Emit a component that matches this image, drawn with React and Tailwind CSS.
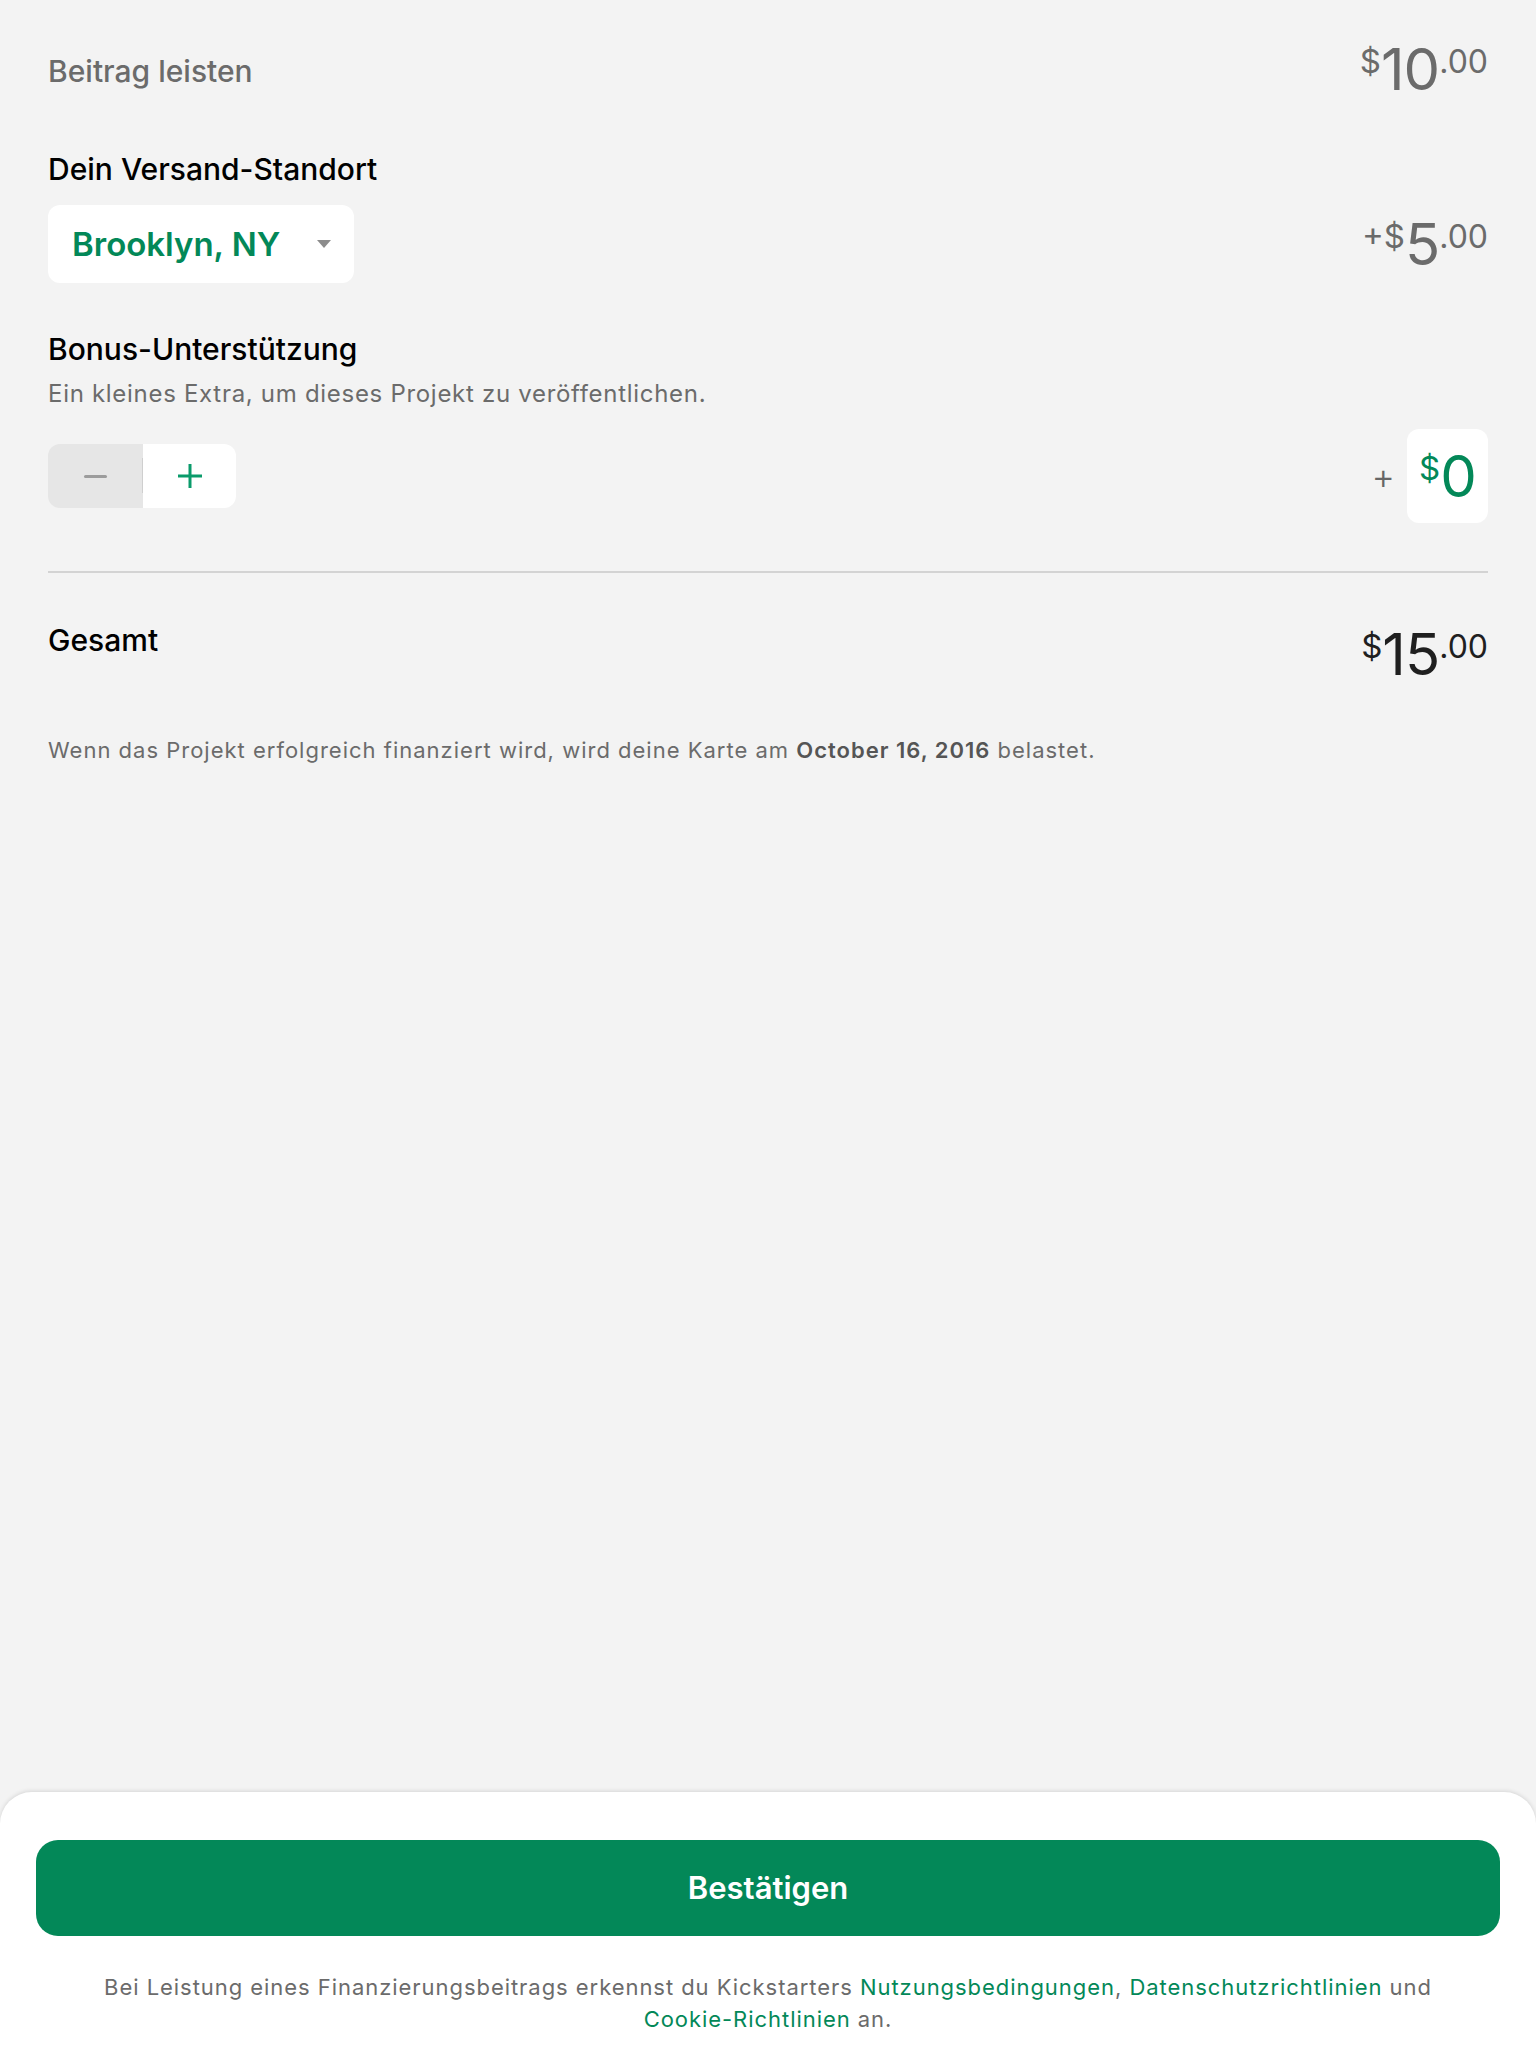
import React from "react";

const Price = ({ prefix, whole, cents, color }) => (
  <div className={`flex items-start leading-none ${color}`}>
    {prefix && <span className="text-[33px] mt-[5px]">{prefix}</span>}
    <span className="text-[58px] leading-none tracking-[-1px]">{whole}</span>
    {cents && <span className="text-[32px] mt-[6px]">{cents}</span>}
  </div>
);

const Caret = () => (
  <svg width="14" height="8" viewBox="0 0 14 8" className="shrink-0">
    <path d="M0 0h14L7 8z" fill="#8c8c8c" />
  </svg>
);

const Stepper = () => (
  <div className="flex w-[188px] h-16 rounded-[12px] overflow-hidden">
    <button className="w-[95px] h-full bg-[#e6e6e6] flex items-center justify-center relative">
      <span className="block w-[23px] h-[3px] bg-[#9c9c9c] rounded-sm" />
      <span className="absolute right-0 top-[14px] h-[35px] w-px bg-[#cfcfcf]" />
    </button>
    <button className="flex-1 h-full bg-white flex items-center justify-center">
      <svg width="24" height="24" viewBox="0 0 24 24">
        <path d="M12 0v24M0 12h24" stroke="#0a9b6b" strokeWidth="3" />
      </svg>
    </button>
  </div>
);

const App = () => {
  return (
    <div className="min-h-screen flex flex-col bg-[#f3f3f3] font-[family-name:Inter,sans-serif]">
      <div className="flex-1 px-12 pt-[40px]">
        {/* Beitrag */}
        <div className="flex justify-between items-start">
          <p className="mt-[16px] text-[30px] leading-none font-medium text-[#6b6b6b]">
            Beitrag leisten
          </p>
          <Price prefix="$" whole="10" cents=".00" color="text-[#6b6b6b]" />
        </div>

        {/* Versand */}
        <p className="mt-[56px] text-[30px] leading-none font-medium text-black">
          Dein Versand-Standort
        </p>
        <div className="mt-[21px] flex justify-between items-center">
          <div className="w-[306px] h-[78px] bg-white rounded-[12px] flex items-center justify-between pl-6 pr-[23px]">
            <span className="text-[33px] leading-none font-semibold text-[#038858]">
              Brooklyn, NY
            </span>
            <Caret />
          </div>
          <Price prefix="+$" whole="5" cents=".00" color="text-[#6b6b6b]" />
        </div>

        {/* Bonus */}
        <p className="mt-[51px] text-[30px] leading-none font-medium text-black">
          Bonus-Unterstützung
        </p>
        <p className="mt-[18px] text-[24px] leading-none tracking-[0.7px] text-[#6b6b6b]">
          Ein kleines Extra, um dieses Projekt zu veröffentlichen.
        </p>
        <div className="mt-[23px] flex justify-between items-center">
          <Stepper />
          <div className="flex items-center gap-[12px]">
            <span className="text-[36px] leading-none font-light text-[#666]">+</span>
            <div className="w-[81px] h-[94px] bg-white rounded-[12px] flex items-center justify-center">
              <Price prefix="$" whole="0" color="text-[#038858]" />
            </div>
          </div>
        </div>

        <div className="mt-[48px] h-[2px] bg-[#d3d3d3]" />

        {/* Gesamt */}
        <div className="mt-[52px] flex justify-between items-start">
          <p className="text-[30px] leading-none font-medium text-black">Gesamt</p>
          <Price prefix="$" whole="15" cents=".00" color="text-[#1f1f1f]" />
        </div>

        <p className="mt-[56px] text-[22px] leading-none tracking-[1px] text-[#6b6b6b]">
          Wenn das Projekt erfolgreich finanziert wird, wird deine Karte am{" "}
          <span className="font-semibold text-[#555]">October 16, 2016</span> belastet.
        </p>
      </div>

      {/* Bottom sheet */}
      <div className="h-[256px] bg-white rounded-t-[32px] shadow-[0_-1px_4px_rgba(0,0,0,0.12)] px-9 pt-12">
        <button className="w-full h-24 rounded-[22px] bg-[#038858] text-white text-[31px] font-semibold">
          Bestätigen
        </button>
        <p className="mt-[35px] text-center text-[22px] leading-[32px] tracking-[0.95px] text-[#6b6b6b]">
          Bei Leistung eines Finanzierungsbeitrags erkennst du Kickstarters{" "}
          <span className="text-[#038858]">Nutzungsbedingungen</span>,{" "}
          <span className="text-[#038858]">Datenschutzrichtlinien</span> und
          <br />
          <span className="text-[#038858]">Cookie-Richtlinien</span> an.
        </p>
      </div>
    </div>
  );
};

export default App;
